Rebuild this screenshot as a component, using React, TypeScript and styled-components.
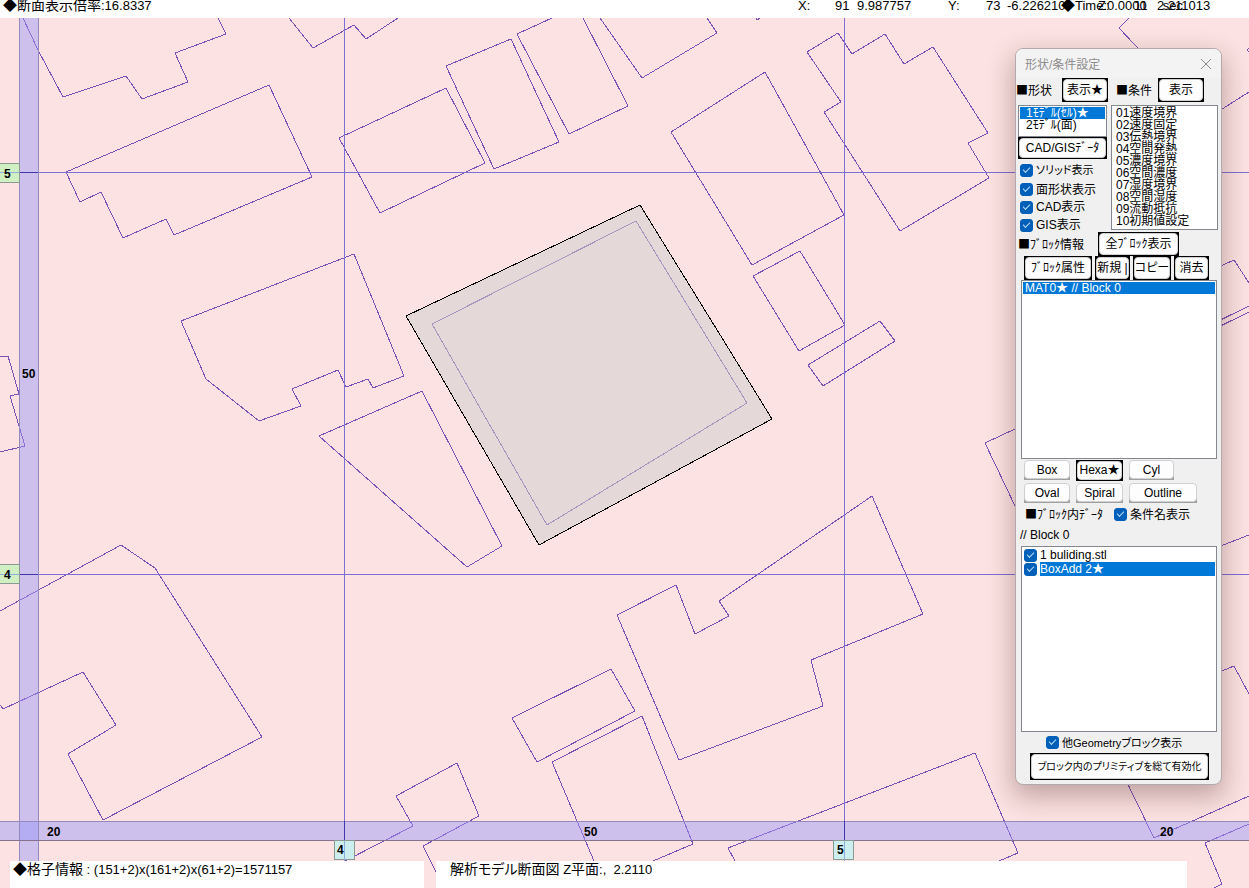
import React, { useState } from 'react';
import styled, { createGlobalStyle, css } from 'styled-components';

const GlobalStyle = createGlobalStyle`
  *, *::before, *::after { box-sizing: border-box; }
  body {
    margin: 0;
    background: #fff;
    color: #000;
    font-family: "Liberation Sans", "Noto Sans CJK JP", sans-serif;
    font-size: 12px;
    font-feature-settings: "palt";
  }
`;

const Shell = styled.div`
  display: flex;
  flex-direction: column;
  height: 100vh;
  overflow: hidden;
`;

/* ---------- status bar ---------- */

const StatusBar = styled.header`
  position: relative;
  display: flex;
  justify-content: space-between;
  height: 18px;
  padding: 0 40px 0 3px;
  font-size: 13px;
  line-height: 11px;
  white-space: pre;
  overflow: hidden;
`;

const Jp = styled.span`
  font-size: 14px;
`;

const Readouts = styled.dl`
  display: flex;
  margin: 0;
`;

const Axis = styled.dt<{ $width: number }>`
  width: ${(p) => p.$width}px;
`;

const Value = styled.dd<{ $width: number }>`
  width: ${(p) => p.$width}px;
  margin: 0;
`;

const TimeReadout = styled.div`
  position: absolute;
  right: 66px;
  top: 0;
  display: flex;
  gap: 16px;
`;

/* ---------- drawing ---------- */

const Stage = styled.main`
  position: relative;
  flex: 1;
  min-height: 0;
  background: #fce2e2;
  overflow: hidden;
`;

const Drawing = styled.svg`
  display: block;
  width: 100%;
  height: 100%;
`;

const Footer = styled.footer`
  position: absolute;
  left: 0;
  right: 0;
  bottom: 0;
  display: grid;
  grid-template-columns: 414fr 751fr;
  gap: 12px;
  padding: 0 62px 0 10px;
`;

const FooterBox = styled.div<{ $indent: number }>`
  height: 27px;
  padding-left: ${(p) => p.$indent}px;
  background: #fff;
  font-size: 13px;
  line-height: 17px;
  white-space: pre;
`;

/* ---------- dialog ---------- */

const Dialog = styled.section`
  position: absolute;
  top: 30px;
  right: 27px;
  width: 207px;
  padding-bottom: 4px;
  border: 1px solid #b3a9aa;
  border-radius: 8px;
  background: #f0f0f0;
  box-shadow: 0 10px 26px 2px rgba(60, 20, 20, 0.3);
  overflow: hidden;
`;

const TitleBar = styled.div`
  display: flex;
  align-items: center;
  justify-content: space-between;
  height: 29px;
  padding: 0 8px 0 9px;
  background: #f4f3f3;
  color: #8d8d8d;
`;

const Title = styled.h1`
  margin: 0;
  font-size: 12px;
  font-weight: 400;
`;

const CloseButton = styled.button`
  display: flex;
  padding: 1px;
  border: 0;
  background: none;
  color: #8d8d8d;
`;

const Row = styled.div<{ $height: number; $left?: number; $gap?: number }>`
  display: flex;
  align-items: center;
  height: ${(p) => p.$height}px;
  padding-left: ${(p) => p.$left ?? 0}px;
  gap: ${(p) => p.$gap ?? 0}px;
  line-height: 12px;
  white-space: nowrap;
`;

const Caption = styled.span<{ $width: number; $left?: number }>`
  flex: none;
  width: ${(p) => p.$width}px;
  padding-left: ${(p) => p.$left ?? 0}px;

  &::before {
    content: "■";
    font-family: "Noto Sans CJK JP", sans-serif;
    font-feature-settings: normal;
  }
`;

const Face = styled.span`
  display: flex;
  align-items: center;
  justify-content: center;
  width: 100%;
  height: 100%;
  border: 1px solid #d0d0d0;
  border-radius: 4px;
  background: #fdfdfd;
  line-height: 12px;
  white-space: pre;
`;

const PushButton = styled.button<{
  $width: number;
  $height?: number;
  $plain?: boolean;
  $compact?: boolean;
}>`
  flex: none;
  width: ${(p) => p.$width}px;
  height: ${(p) => p.$height ?? 24}px;
  padding: 1px;
  border: 0;
  background: #000;
  color: #000;
  font: inherit;
  font-size: ${(p) => (p.$compact ? 10 : 12)}px;
  font-feature-settings: inherit;

  ${(p) =>
    p.$plain &&
    css`
      padding: 0 0 1px;
      background: linear-gradient(#f0f0f0 50%, #a0a0a0 50%);
    `}
`;

const Columns = styled.div`
  display: grid;
  grid-template-columns: 89px 107px;
  gap: 4px;
  margin-bottom: -2px;
  padding: 3px 0 0 2px;
`;

const Stack = styled.div`
  display: flex;
  flex-direction: column;
`;

const ListBox = styled.select<{ $height: number; $indent?: number }>`
  display: block;
  width: 100%;
  height: ${(p) => p.$height}px;
  padding: 1px;
  border: 1px solid #828790;
  border-radius: 0;
  background: #fff;
  color: #000;
  font: inherit;
  font-feature-settings: inherit;
  overflow: hidden;
  outline: 0;
  scrollbar-width: none;

  option {
    display: flex;
    align-items: center;
    height: 12px;
    min-height: 12px;
    padding: 0 0 4px ${(p) => p.$indent ?? 2}px;
    line-height: 12px;
    white-space: pre;
    overflow: visible;
  }
  option:checked {
    background: linear-gradient(#0078d7, #0078d7);
    color: #fff;
    -webkit-text-fill-color: #fff;
  }
`;

const CheckLabel = styled.label<{ $height?: number; $compact?: boolean }>`
  display: flex;
  align-items: center;
  gap: 3px;
  height: ${(p) => p.$height ?? 18}px;
  font-size: ${(p) => (p.$compact ? 11 : 12)}px;
  line-height: 12px;
  white-space: nowrap;
`;

const CheckInput = styled.input`
  appearance: none;
  position: relative;
  flex: none;
  width: 13px;
  height: 13px;
  margin: 0;
  border: 1px solid #005fb8;
  border-radius: 3px;
  background: #fff;

  &:checked {
    background: #005fb8;
  }
  &:checked::after {
    content: "";
    position: absolute;
    left: 2px;
    top: 2px;
    width: 7px;
    height: 4px;
    border: solid #b9dcf7;
    border-width: 0 0 1px 1px;
    transform: rotate(-45deg);
  }
`;

const BlockArea = styled.div`
  padding: 0 4px 0 5px;
`;

const CheckList = styled.ul`
  height: 186px;
  margin: 0;
  padding: 1px;
  border: 1px solid #828790;
  background: #fff;
  list-style: none;
`;

const CheckListItem = styled.li`
  padding-left: 1px;
`;

const ItemText = styled.span<{ $selected?: boolean }>`
  flex: 1;
  line-height: 14px;
  ${(p) =>
    p.$selected &&
    css`
      background: #0078d7;
      color: #fff;
    `}
`;

/* ---------- data ---------- */

const outlines = [
  '23,18 38,50 63,97 126,76 142,99 188,82 175,53 226,34 218,18',
  '289,18 313,48 354,25 366,39 398,18',
  '269,85 312,177 174,235 166,219 123,238 101,192 80,202 66,172 269,85',
  '446,88 485,163 380,213 339,138 446,88',
  '446,66 511,39 559,142 494,169 446,66',
  '552,18 517,34 569,134 628,106 583,18',
  '600,18 642,78 717,33 707,18',
  '756,18 757,20 760,18',
  '671,132 765,72 844,215 752,265 671,132',
  '838,33 852,54 885,34 904,64 933,47 988,133 968,143 989,178 900,231 824,112 841,102 807,52 838,33',
  '753,276 800,251 845,325 799,351 753,276',
  '880,321 895,341 823,386 808,365 880,321',
  '181,321 354,254 404,376 373,388 368,379 346,387 338,370 292,389 301,406 259,421 206,379 181,321',
  '422,391 502,546 467,567 319,436 422,391',
  '0,357 8,356 19,394 10,396 25,446 0,452',
  '0,611 121,545 155,568 262,737 103,820 68,754 116,725 83,672 3,709 0,705',
  '345,861 413,826 396,796 457,763 479,816 423,846 435,870 443,888',
  '617,615 676,585 695,634 729,616 719,601 872,496 923,614 811,660 823,706 679,760 617,615',
  '512,718 611,669 635,711 537,762 512,718',
  '594,861 552,762 642,716 693,844 653,861',
  '735,861 728,848 975,753 1018,853 999,861',
  '1030,422 985,443 1016,508 1030,536',
  '1129,18 1119,28 1150,61',
  '1249,48 1247,50 1249,52',
  '1200,123 1249,92',
  '1200,275 1234,260 1249,283',
  '1200,330 1249,306',
  '1200,336 1249,312',
  '1200,554 1249,535',
  '1200,680 1234,666 1249,694',
  '1120,768 1154,838 1249,796',
  '1249,824 1205,843 1222,884 1214,888',
];

const conditions = [
  '01速度境界',
  '02速度固定',
  '03伝熱境界',
  '04空間発熱',
  '05濃度境界',
  '06空間濃度',
  '07湿度境界',
  '08空間湿度',
  '09流動抵抗',
  '10初期値設定',
];

const axisLabels = [
  { x: 22, y: 378, text: '50' },
  { x: 47, y: 836, text: '20' },
  { x: 584, y: 836, text: '50' },
  { x: 1160, y: 836, text: '20' },
];

const gridChips = [
  { x: -1, y: 163, w: 20, tx: 4, ty: 178, text: '5', fill: '#d0efc2' },
  { x: -1, y: 564, w: 20, tx: 4, ty: 579, text: '4', fill: '#d0efc2' },
  { x: 334, y: 840, w: 20, tx: 337, ty: 854, text: '4', fill: '#cdeeee' },
  { x: 833, y: 840, w: 20, tx: 837, ty: 854, text: '5', fill: '#cdeeee' },
];

/* ---------- parts ---------- */

function Check({ text, compact }: { text: string; compact?: boolean }) {
  const [on, setOn] = useState(true);
  return (
    <CheckLabel $compact={compact}>
      <CheckInput type="checkbox" checked={on} onChange={() => setOn(!on)} />
      {text}
    </CheckLabel>
  );
}

function Push({
  text,
  width,
  height,
  plain,
  compact,
}: {
  text: string;
  width: number;
  height?: number;
  plain?: boolean;
  compact?: boolean;
}) {
  return (
    <PushButton type="button" $width={width} $height={height} $plain={plain} $compact={compact}>
      <Face>{text}</Face>
    </PushButton>
  );
}

function SectionDrawing() {
  return (
    <Drawing viewBox="0 18 1249 870" preserveAspectRatio="xMinYMin slice" role="img" aria-label="解析モデル断面図">
      <g fill="none" stroke="#7c51b6" strokeWidth="1" shapeRendering="crispEdges">
        {outlines.map((points) => (
          <polyline key={points} points={points} />
        ))}
      </g>
      <g shapeRendering="crispEdges">
        <path d="M640 205 772 419 539 545 406 316Z" fill="#e5d8d8" stroke="#000" />
        <path d="M636 221 747 403 547 525 432 324Z" fill="none" stroke="#a894bf" />
        <path d="M344.5 18V861M844.5 18V861M0 172.5H1249M0 574.5H1249" stroke="#7c6fd6" />
        <rect x="19" y="18" width="20" height="843" fill="#9696fa" fillOpacity="0.45" />
        <rect x="0" y="821" width="1249" height="20" fill="#9696fa" fillOpacity="0.45" />
        <path d="M19.5 18V861M38.5 18V861M0 821.5H1249" stroke="#958abd" />
        <path d="M0 840.5H1249" stroke="#86718c" />
        <path d="M344.5 821V840M844.5 821V840M20 172.5H38M20 574.5H38" stroke="#4038a8" />
        {gridChips.map((c) => (
          <rect
            key={`${c.x}-${c.y}`}
            x={c.x + 0.5}
            y={c.y + 0.5}
            width={c.w}
            height="19"
            fill={c.fill}
            stroke="#8b9a92"
          />
        ))}
        <path d="M344.5 841V861M844.5 841V861M0 172.5H19M0 574.5H19" stroke="#8fb0dc" />
      </g>
      <g fontFamily="Liberation Sans, sans-serif" fontSize="12" fontWeight="700" fill="#000">
        {axisLabels.map((l) => (
          <text key={`${l.x}-${l.y}`} x={l.x} y={l.y}>
            {l.text}
          </text>
        ))}
        {gridChips.map((c) => (
          <text key={`${c.x}-${c.y}`} x={c.tx} y={c.ty}>
            {c.text}
          </text>
        ))}
      </g>
    </Drawing>
  );
}

function SettingsDialog() {
  return (
    <Dialog aria-label="形状/条件設定">
      <TitleBar>
        <Title>形状/条件設定</Title>
        <CloseButton type="button" aria-label="閉じる">
          <svg width="12" height="12" viewBox="0 0 12 12">
            <path d="M1 1 11 11M11 1 1 11" stroke="currentColor" fill="none" />
          </svg>
        </CloseButton>
      </TitleBar>

      <Row $height={24}>
        <Caption $width={46}>形状</Caption>
        <Push text="表示★" width={46} />
        <Caption $width={50} $left={8}>
          条件
        </Caption>
        <Push text="表示" width={46} />
      </Row>

      <Columns>
        <Stack>
          <ListBox size={2} defaultValue="1" aria-label="形状" $height={32} $indent={6}>
            <option value="1">1ﾓﾃﾞﾙ(ｾﾙ)★</option>
            <option value="2">2ﾓﾃﾞﾙ(面)</option>
          </ListBox>
          <Push text="CAD/GISﾃﾞｰﾀ" width={89} height={22} />
          <Row $height={22} $left={2}>
            <Check text="ソリッド表示" compact />
          </Row>
          <Row $height={17} $left={2}>
            <Check text="面形状表示" />
          </Row>
          <Row $height={18} $left={2}>
            <Check text="CAD表示" />
          </Row>
          <Row $height={18} $left={2}>
            <Check text="GIS表示" />
          </Row>
        </Stack>
        <ListBox size={10} aria-label="条件" $height={125} $indent={3}>
          {conditions.map((c) => (
            <option key={c}>{c}</option>
          ))}
        </ListBox>
      </Columns>

      <Row $height={24} $left={2}>
        <Caption $width={80}>ﾌﾞﾛｯｸ情報</Caption>
        <Push text="全ﾌﾞﾛｯｸ表示" width={81} />
      </Row>
      <Row $height={24} $left={8} $gap={3}>
        <Push text="ﾌﾞﾛｯｸ属性" width={68} />
        <Push text="新規 |" width={35} />
        <Push text="コピー" width={38} />
        <Push text="消去" width={35} />
      </Row>

      <BlockArea>
        <ListBox size={10} defaultValue="0" aria-label="ブロック" $height={179}>
          <option value="0">MAT0★ // Block 0</option>
        </ListBox>
      </BlockArea>

      <Row $height={22} $left={8} $gap={6}>
        <Push text="Box" width={46} height={20} plain />
        <Push text="Hexa★" width={47} height={21} />
        <Push text="Cyl" width={45} height={20} plain />
      </Row>
      <Row $height={24} $left={8} $gap={6}>
        <Push text="Oval" width={46} height={20} plain />
        <Push text="Spiral" width={47} height={20} plain />
        <Push text="Outline" width={68} height={20} plain />
      </Row>
      <Row $height={19} $left={9}>
        <Caption $width={89}>ﾌﾞﾛｯｸ内ﾃﾞｰﾀ</Caption>
        <Check text="条件名表示" />
      </Row>
      <Row $height={22} $left={4}>
        {'// Block 0'}
      </Row>

      <BlockArea>
        <CheckList>
          <CheckListItem>
            <CheckLabel $height={14}>
              <CheckInput type="checkbox" defaultChecked />
              <ItemText>1 buliding.stl</ItemText>
            </CheckLabel>
          </CheckListItem>
          <CheckListItem>
            <CheckLabel $height={14}>
              <CheckInput type="checkbox" defaultChecked />
              <ItemText $selected>BoxAdd 2★</ItemText>
            </CheckLabel>
          </CheckListItem>
        </CheckList>
      </BlockArea>

      <Row $height={21} $left={30}>
        <Check text="他Geometryブロック表示" compact />
      </Row>
      <Row $height={27} $left={14}>
        <Push text="ブロック内のプリミティブを総て有効化" width={179} height={27} compact />
      </Row>
    </Dialog>
  );
}

export default function App() {
  return (
    <Shell>
      <GlobalStyle />
      <StatusBar>
        <div>
          <Jp>◆断面表示倍率</Jp>:16.8337
        </div>
        <Readouts>
          <Axis $width={37}>X:</Axis>
          <Value $width={22}>91</Value>
          <Value $width={91}>9.987757</Value>
          <Axis $width={38}>Y:</Axis>
          <Value $width={21}>73</Value>
          <Value $width={91}>-6.226210</Value>
          <Axis $width={36}>Z:</Axis>
          <Value $width={23}>11</Value>
          <Value $width={52}>2.211013</Value>
        </Readouts>
        <TimeReadout>
          <span>
            <Jp>◆</Jp>Time:0.0000
          </span>
          <span>sec</span>
        </TimeReadout>
      </StatusBar>
      <Stage>
        <SectionDrawing />
        <Footer>
          <FooterBox $indent={3}>
            <Jp>◆格子情報</Jp> : (151+2)x(161+2)x(61+2)=1571157
          </FooterBox>
          <FooterBox $indent={14}>
            <Jp>解析モデル断面図</Jp> Z<Jp>平面</Jp>:,&nbsp; 2.2110
          </FooterBox>
        </Footer>
        <SettingsDialog />
      </Stage>
    </Shell>
  );
}
